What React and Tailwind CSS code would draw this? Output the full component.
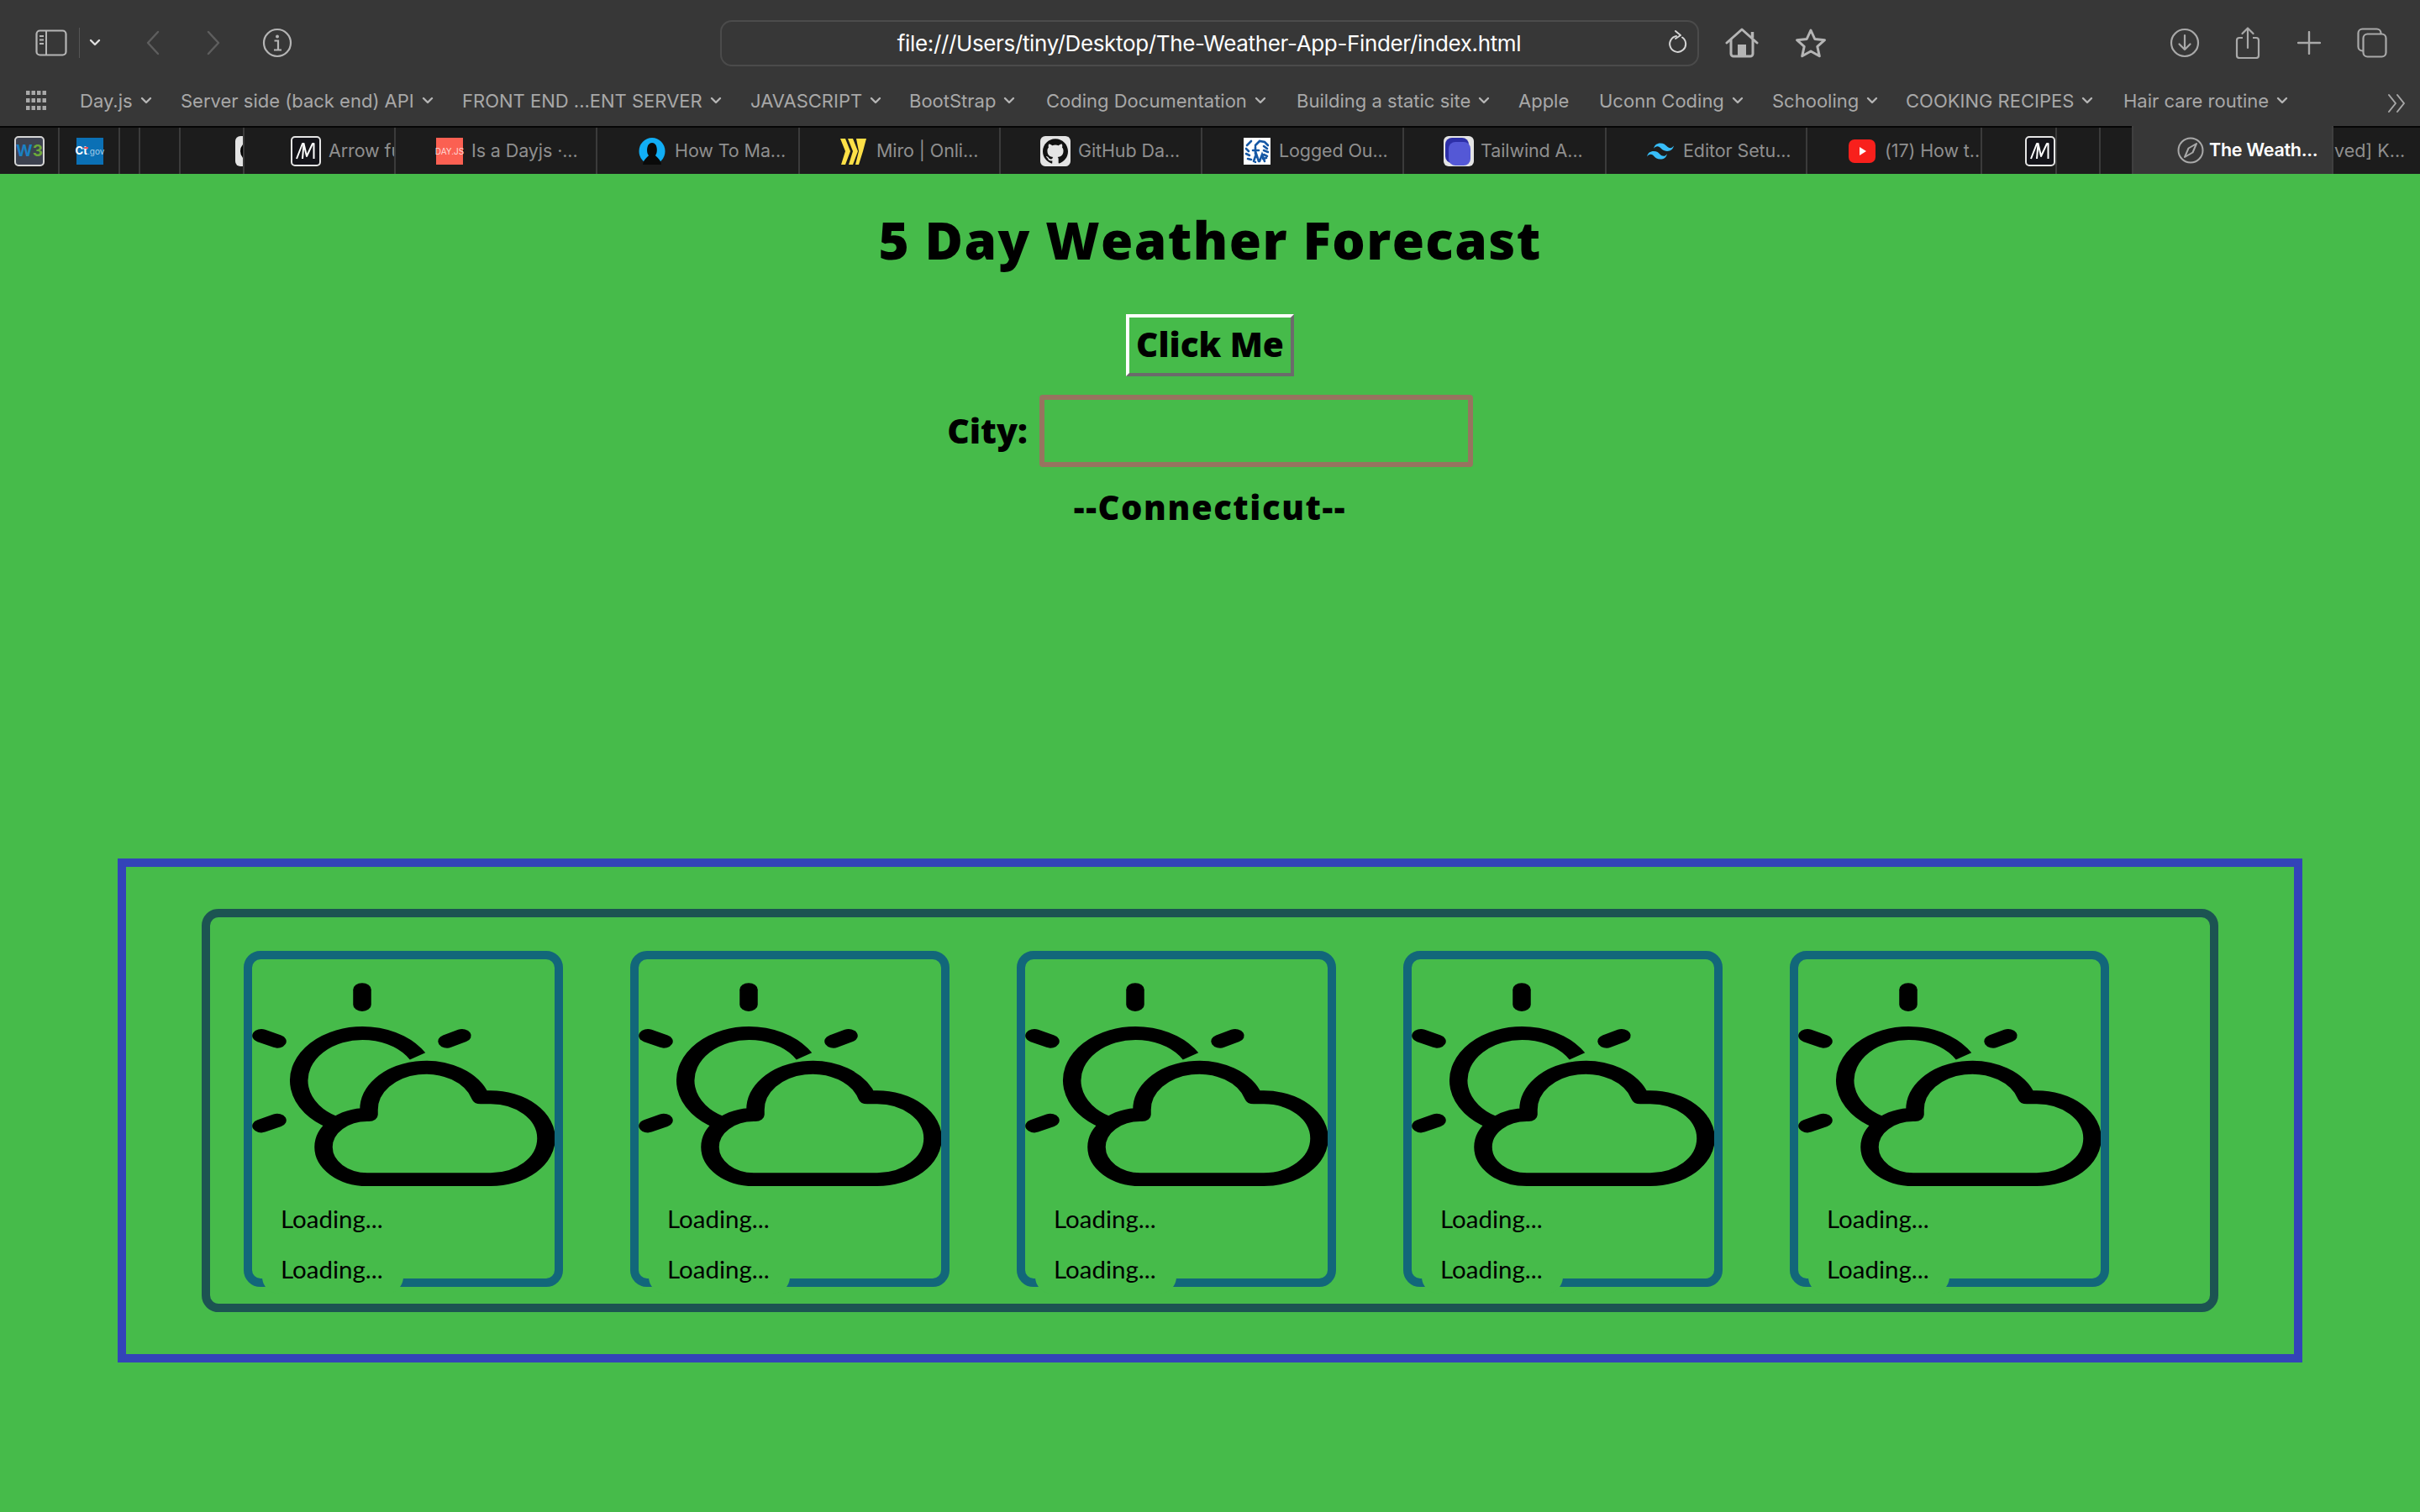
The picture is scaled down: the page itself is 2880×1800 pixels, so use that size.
import React from "react";
import { SiGithub, SiTailwindcss } from "react-icons/si";

const ui = "font-['Inter','Liberation_Sans',sans-serif]";
const gill = "font-['Lato','Open_Sans',sans-serif]";
const heavy = "font-['Open_Sans','Lato',sans-serif] font-extrabold";

function Chev({ className = "" }) {
  return (
    <svg width="14" height="10" viewBox="0 0 14 10" className={className}>
      <path d="M2 2l5 5 5-5" fill="none" stroke="currentColor" strokeWidth="2.4" strokeLinecap="round" strokeLinejoin="round" />
    </svg>
  );
}

function Toolbar() {
  return (
    <div className="h-[150px] bg-[#373737] flex flex-col">
      <div className="h-[102px] flex items-center text-[#a9a9a9] relative">
        <div className="w-[857px] flex items-center shrink-0">
          <svg width="38" height="32" viewBox="0 0 38 32" className="ml-[42px]">
            <rect x="1.5" y="1.5" width="35" height="29" rx="4" fill="none" stroke="#b5b5b5" strokeWidth="2.2" />
            <path d="M13 2v28" stroke="#b5b5b5" strokeWidth="2" />
            <path d="M5 8h5M5 12.5h5M5 17h5" stroke="#b5b5b5" strokeWidth="2" />
          </svg>
          <div className="w-px h-[36px] bg-[#555] ml-[14px]" />
          <Chev className="ml-[11px] text-[#dedede]" />
          <svg width="20" height="30" viewBox="0 0 20 30" className="ml-[52px]">
            <path d="M16 2L4 15l12 13" fill="none" stroke="#5e5e5e" strokeWidth="2.4" strokeLinecap="round" strokeLinejoin="round" />
          </svg>
          <svg width="20" height="30" viewBox="0 0 20 30" className="ml-[52px]">
            <path d="M4 2l12 13L4 28" fill="none" stroke="#5e5e5e" strokeWidth="2.4" strokeLinecap="round" strokeLinejoin="round" />
          </svg>
          <svg width="36" height="36" viewBox="0 0 36 36" className="ml-[48px]">
            <circle cx="18" cy="18" r="16" fill="none" stroke="#b5b5b5" strokeWidth="2.2" />
            <circle cx="18" cy="10.5" r="2" fill="#b5b5b5" />
            <path d="M14.5 15.5H19V26M14 26.5h9" fill="none" stroke="#b5b5b5" strokeWidth="2.2" />
          </svg>
        </div>
        <div className="w-[1165px] h-[55px] mt-[1px] rounded-[14px] border-2 border-[#4b4b4b] flex items-center justify-center relative shrink-0">
          <span className={`${ui} text-[26px] text-white tracking-[-0.35px] ml-[-1px]`}>file:///Users/tiny/Desktop/The-Weather-App-Finder/index.html</span>
          <svg width="24" height="30" viewBox="0 0 24 30" className="absolute right-[11px] top-[9px]">
            <path d="M17 9.5a9.5 9.5 0 1 1-7-1.5" fill="none" stroke="#d5d5d5" strokeWidth="2" strokeLinecap="round" />
            <path d="M9 2l6 5-6 4" fill="none" stroke="#d5d5d5" strokeWidth="2" strokeLinecap="round" strokeLinejoin="round" />
          </svg>
        </div>
        <svg width="40" height="36" viewBox="0 0 40 36" className="ml-[31px]">
          <path d="M2 18L20 2l18 16" fill="none" stroke="#b5b5b5" strokeWidth="3" strokeLinecap="round" strokeLinejoin="round" />
          <path d="M32.5 12V5" stroke="#b5b5b5" strokeWidth="3.5" />
          <path d="M7 14v17a3 3 0 0 0 3 3h20a3 3 0 0 0 3-3V14" fill="none" stroke="#b5b5b5" strokeWidth="3" />
          <rect x="15" y="20" width="10" height="14" fill="#b5b5b5" />
        </svg>
        <svg width="38" height="36" viewBox="0 0 38 36" className="ml-[43px]">
          <path d="M19 3l4.800 10.500 11.700 1.200-8.700 7.700 2.500 11.300L19 28l-10.300 5.700 2.500-11.300-8.700-7.700 11.700-1.200z" fill="none" stroke="#b5b5b5" strokeWidth="3" strokeLinejoin="round" />
        </svg>
        <svg width="36" height="36" viewBox="0 0 36 36" className="ml-[408px]">
          <circle cx="18" cy="18" r="16" fill="none" stroke="#a9a9a9" strokeWidth="2.2" />
          <path d="M18 9v17M11.5 19.5L18 26l6.500-6.500" fill="none" stroke="#a9a9a9" strokeWidth="2.2" strokeLinecap="round" strokeLinejoin="round" />
        </svg>
        <svg width="30" height="38" viewBox="0 0 30 38" className="ml-[42px]">
          <path d="M9 13H5a3 3 0 0 0-3 3v18a3 3 0 0 0 3 3h20a3 3 0 0 0 3-3V16a3 3 0 0 0-3-3h-4" fill="none" stroke="#a9a9a9" strokeWidth="2.2" />
          <path d="M15 25V2M8.500 8L15 1.500 21.500 8" fill="none" stroke="#a9a9a9" strokeWidth="2.2" strokeLinecap="round" strokeLinejoin="round" />
        </svg>
        <svg width="28" height="28" viewBox="0 0 28 28" className="ml-[44px]">
          <path d="M14 1v26M1 14h26" stroke="#a9a9a9" strokeWidth="2.4" strokeLinecap="round" />
        </svg>
        <svg width="36" height="36" viewBox="0 0 36 36" className="ml-[43px]">
          <rect x="1.500" y="1.500" width="27" height="26" rx="5" fill="none" stroke="#a9a9a9" strokeWidth="2.2" />
          <rect x="7.500" y="7.500" width="27" height="27" rx="5" fill="#373737" stroke="#a9a9a9" strokeWidth="2.2" />
        </svg>
      </div>
      <Bookmarks />
    </div>
  );
}

const bookmarks = [
  ["Day.js", true, "w-[120px]"],
  ["Server side (back end) API", true, "w-[335px]"],
  ["FRONT END ...ENT SERVER", true, "w-[343px]"],
  ["JAVASCRIPT", true, "w-[189px]"],
  ["BootStrap", true, "w-[163px]"],
  ["Coding Documentation", true, "w-[298px]"],
  ["Building a static site", true, "w-[264px]"],
  ["Apple", false, "w-[96px]"],
  ["Uconn Coding", true, "w-[206px]"],
  ["Schooling", true, "w-[159px]"],
  ["COOKING RECIPES", true, "w-[259px]"],
  ["Hair care routine", true, "w-[200px]"],
];

function Bookmarks() {
  return (
    <div className={`h-[48px] pb-[12px] flex items-center text-[#a8a8a8] ${ui} text-[22px] leading-none`}>
      <svg width="28" height="26" viewBox="0 0 28 26" className="ml-[30px] mr-[37px]">
        <g fill="#a8a8a8">
          {[0, 9, 18].map((y) =>
            [1, 7.5, 14, 20.5].map((x) => <rect key={`${x}-${y}`} x={x} y={y + 1} width="4.5" height="5" />)
          )}
        </g>
      </svg>
      {bookmarks.map(([t, c, w]) => (
        <div key={t} className={`${w} flex items-center gap-[9px] whitespace-nowrap shrink-0`}>
          <span>{t}</span>
          {c && <Chev className="text-[#b5b5b5] shrink-0" />}
        </div>
      ))}
      <svg width="24" height="24" viewBox="0 0 24 24" className="ml-[113px] mt-[6px]">
        <path d="M3 2l8 10-8 10M13 2l8 10-8 10" fill="none" stroke="#a8a8a8" strokeWidth="2" strokeLinecap="round" strokeLinejoin="round" />
      </svg>
    </div>
  );
}

function MIcon() {
  return (
    <div className="w-[36px] h-[36px] rounded-[5px] bg-[#14141a] border-2 border-[#e4e4e4] flex items-center justify-center shrink-0">
      <svg width="26" height="24" viewBox="0 0 26 24">
        <path d="M2 21L9 3h1.500L9 21M10.500 3L14 18 21 3h1.500v18" fill="none" stroke="#fff" strokeWidth="2" strokeLinejoin="round" />
      </svg>
    </div>
  );
}

function Tab({ w, start, icon, text, clip }) {
  return (
    <div className={`${w} h-full border-r-2 border-[#3b3b3b] flex items-center relative overflow-hidden shrink-0`}>
      {icon && <div className={`${start} flex items-center shrink-0`}>{icon}</div>}
      {text && <span className={`${clip} ${ui} text-[21.5px] tracking-[-0.1px] text-[#8f8f8f] whitespace-nowrap`}>{text}</span>}
    </div>
  );
}

function Tabs() {
  return (
    <div className="h-[57px] bg-[#1c1c1c] border-t-2 border-[#060606] flex">
      <Tab w="w-[71px]" start="ml-[17px]" icon={
        <div className={`w-[36px] h-[36px] rounded-[5px] bg-[#3d4250] border-2 border-[#d5d5d5] flex items-center justify-center text-[19px] font-bold leading-none ${ui}`}>
          <span className="text-[#1b80c4]">W</span><span className="text-[#6ca83a]">3</span>
        </div>
      } />
      <Tab w="w-[72px]" start="ml-[20px]" icon={
        <div className={`relative w-[32px] h-[32px] bg-[#0b70b5] flex items-center justify-center text-[#fff] text-[13px] font-bold leading-none ${ui}`}>
          Ct<span className="font-normal text-[#a6cde8] text-[10px]">.gov</span>
          <div className="absolute left-[9px] top-[11px] w-[5px] h-[2px] bg-[#e8505b]" />
        </div>
      } />
      <Tab w="w-[24px]" />
      <Tab w="w-[48px]" />
      <Tab w="w-[76px]" start="ml-[65px]" icon={
        <div className="w-[36px] h-[36px] rounded-[6px] bg-[#e4e4e4] flex items-center justify-center shrink-0">
          <div className="w-[24px] h-[24px] rounded-full bg-black" />
        </div>
      } />
      <Tab w="w-[180px]" start="ml-[55px]" icon={<MIcon />} text="Arrow functions" clip="ml-[9px]" />
      <Tab w="w-[240px]" start="ml-[48px]" icon={
        <div className={`w-[32px] h-[32px] bg-[#fb6052] flex items-center justify-center text-[#ffd9d5] text-[10px] leading-none ${ui}`}>DAY.JS</div>
      } text="Is a Dayjs ·..." clip="ml-[10px]" />
      <Tab w="w-[241px]" start="ml-[49px]" icon={
        <svg width="32" height="32" viewBox="0 0 32 32">
          <ellipse cx="16" cy="16" rx="15.5" ry="16" fill="#11aef5" />
          <path d="M5 32c1-7 6-9 7-11-3-3-3-15 4-15s7 12 4 15c1 2 6 4 7 11z" fill="#0a0a0a" />
        </svg>
      } text="How To Ma..." clip="ml-[11px]" />
      <Tab w="w-[239px]" start="ml-[48px]" icon={
        <svg width="32" height="32" viewBox="0 0 32 32">
          <path d="M0 1h6l6 15-6 16H1l5-16zM9 1h6l6 15-6 16h-5l5-16zM19 1h12l-4 15-5 16h-4l4-16z" fill="#fde047" />
        </svg>
      } text="Miro | Onli..." clip="ml-[11px]" />
      <Tab w="w-[240px]" start="ml-[47px]" icon={
        <div className="w-[36px] h-[36px] rounded-[6px] bg-[#e4e4e4] flex items-center justify-center text-[#111] text-[30px]"><SiGithub /></div>
      } text="GitHub Da..." clip="ml-[9px]" />
      <Tab w="w-[240px]" start="ml-[49px]" icon={
        <svg width="32" height="32" viewBox="0 0 32 32">
          <rect width="32" height="32" fill="#fff" />
          <g fill="none" stroke="#1658a5" strokeWidth="2.600" strokeLinecap="round">
            <path d="M9 4L4 9M3 13l3 3M3 19l4 2M5 25l4 1M14 29h0" />
            <path d="M14 9l5-5 6 1 4 4M24 10l4 3M24 15l5 2M24 20l4 2M23 25l4-1" />
            <path d="M14 11v8M11 15h7M12 28l3-9 3 9M19 28l3-8 3 8" />
          </g>
        </svg>
      } text="Logged Ou..." clip="ml-[10px]" />
      <Tab w="w-[241px]" start="ml-[47px]" icon={
        <div className="w-[36px] h-[36px] rounded-[6px] bg-[#e4e4e4] flex items-center justify-center relative">
          <div className="w-[28px] h-[30px] rounded-[8px] bg-[#2d2fa8] absolute left-[2px] top-[2px]" />
          <div className="w-[26px] h-[28px] rounded-[8px] bg-[#5458d6] absolute left-[6px] top-[7px]" />
        </div>
      } text="Tailwind A..." clip="ml-[8px]" />
      <Tab w="w-[239px]" start="ml-[48px]" icon={<div className="text-[#38bdf8] text-[32px]"><SiTailwindcss /></div>} text="Editor Setu..." clip="ml-[11px]" />
      <Tab w="w-[208px]" start="ml-[49px]" icon={
        <svg width="32" height="32" viewBox="0 0 32 32">
          <rect y="2" width="32" height="28" rx="7" fill="#f8201c" />
          <path d="M13 11l8 5-8 5z" fill="#fff" />
        </svg>
      } text="(17) How t.." clip="ml-[11px]" />
      <Tab w="w-[89px]" start="ml-[51px]" icon={<MIcon />} />
      <Tab w="w-[52px]" />
      <div className="w-[37px] h-full shrink-0" />
      <div className="w-[240px] h-[57px] mt-[-2px] bg-[#373737] border-x-2 border-[#3f3f3f] flex items-center shrink-0">
        <svg width="32" height="32" viewBox="0 0 32 32" className="ml-[52px]">
          <circle cx="16" cy="16" r="14.500" fill="none" stroke="#a9a9a9" strokeWidth="2" />
          <path d="M23 8l-9.500 5.500L9 24l9.500-5.500z" fill="none" stroke="#a9a9a9" strokeWidth="2" strokeLinejoin="round" />
        </svg>
        <span className={`ml-[6px] ${ui} text-[21.5px] font-semibold tracking-[-0.3px] text-white whitespace-nowrap`}>The Weath...</span>
      </div>
      <div className={`w-[104px] flex items-center overflow-hidden whitespace-nowrap ${ui} text-[21.5px] text-[#8f8f8f]`}>
        <span className="ml-[1px]">ved] K...</span>
      </div>
    </div>
  );
}

function WeatherIcon() {
  return (
    <svg width="360" height="243" viewBox="0 0 360 328" preserveAspectRatio="none" className="block">
      <g fill="none" stroke="#000" strokeWidth="21.5" strokeLinecap="round" strokeLinejoin="round">
        <path d="M131 11V35" />
        <path d="M11 85L30 94" />
        <path d="M232 94L250 85" />
        <path d="M11 230L30 221" />
        <path d="M197 118A76 76 0 1 0 96 224" strokeLinecap="butt" />
        <path d="M137 316A52 52 0 0 1 137 212H139V205A68 68 0 0 1 272 184H284A66 66 0 0 1 284 316Z" />
      </g>
    </svg>
  );
}

function Card() {
  return (
    <div className="w-[380px] h-[400px] border-[10px] border-[#12677a] rounded-[20px] shrink-0">
      <div className="pt-[28px]"><WeatherIcon /></div>
      <div className={`${gill} text-[29.5px] leading-[40px] text-black mt-[18px]`}>
        <div className="pl-[34px] h-[40px]">Loading...</div>
        <div className="w-[168px] ml-[12px] mt-[20px] h-[49px] pl-[22px] bg-[#46bb4a] rounded-b-[20px]">Loading...</div>
      </div>
    </div>
  );
}

export default function App() {
  return (
    <div className="w-full h-[1800px] bg-[#46bb4a] overflow-hidden flex flex-col">
      <Toolbar />
      <Tabs />
      <main className="flex flex-col items-center text-black">
        <h1 className={`mt-[38px] text-[62px] leading-[80px] h-[80px] tracking-[1.4px] ${heavy}`}>5 Day Weather Forecast</h1>
        <button className={`mt-[49px] w-[200px] h-[74px] pb-[2px] border-4 border-t-white border-l-white border-b-[#6b6b6b] border-r-[#6b6b6b] text-[40.5px] leading-none ${heavy}`}>Click Me</button>
        <div className="mt-[22px] flex items-center gap-[14px]">
          <label className={`text-[41px] leading-none pb-[2px] ${heavy}`}>City:</label>
          <input className="w-[516px] h-[86px] border-[6px] border-[#97745f] rounded-[4px] bg-transparent outline-none" />
        </div>
        <p className={`mt-[28px] text-[40px] leading-[40px] tracking-[1.6px] ${heavy}`}>--Connecticut--</p>
        <section className="mt-[398px] w-[2600px] h-[600px] border-[10px] border-[#3344b8] px-[90px] pt-[50px]">
          <div className="w-[2400px] h-[480px] border-[10px] border-[#1c5452] rounded-[20px] p-[40px] flex gap-[80px]">
            <Card /><Card /><Card /><Card /><Card />
          </div>
        </section>
      </main>
    </div>
  );
}
